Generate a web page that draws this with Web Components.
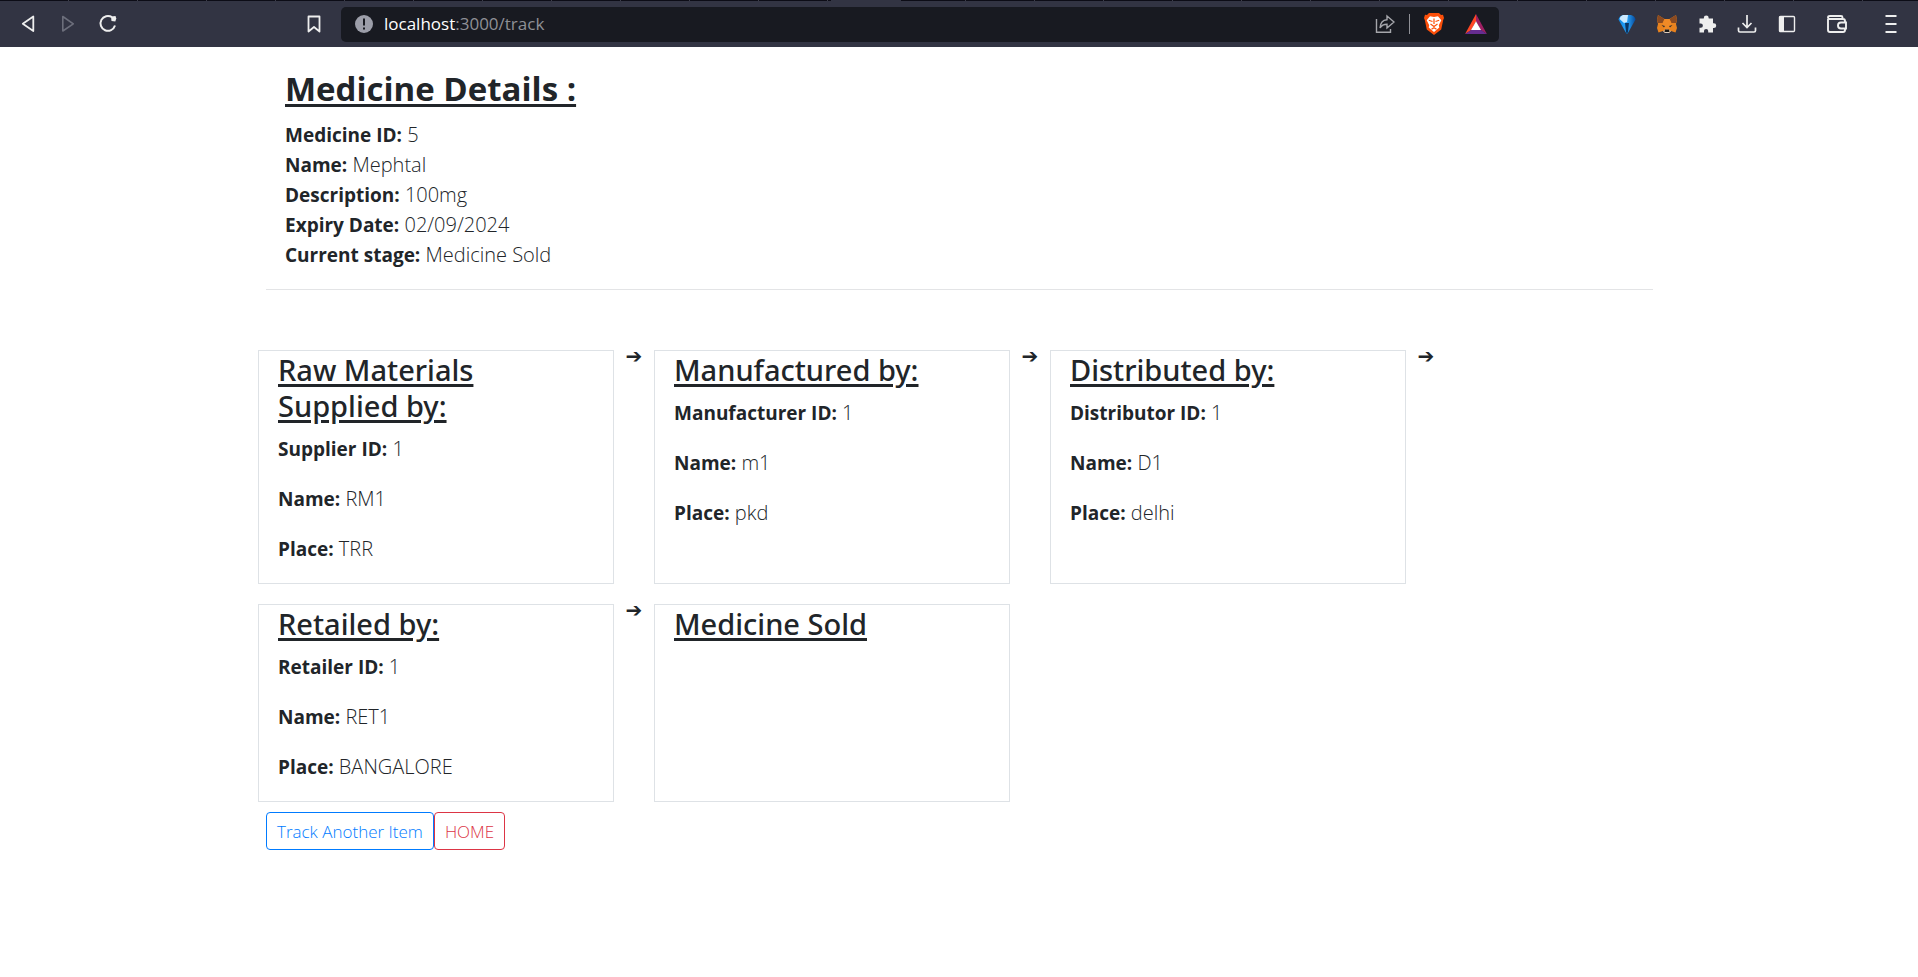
<!DOCTYPE html>
<html lang="en">
<head>
<meta charset="utf-8">
<title>Track</title>
<style>
body{margin:0;background:#fff;color:#212529;font-family:"Open Sans","Noto Sans",sans-serif}
</style>
</head>
<body>
<browser-bar></browser-bar>
<track-page></track-page>
<script>
const define=(name,html,setup)=>customElements.define(name,class extends HTMLElement{
  constructor(){
    super();
    const t=document.createElement('template');
    t.innerHTML=html;
    this.attachShadow({mode:'open'}).append(t.content.cloneNode(true));
  }
  connectedCallback(){if(setup)setup(this,this.shadowRoot);}
});

define('bar-button',`<style>
:host{display:block;flex:none}
button{display:flex;align-items:center;justify-content:center;width:24px;height:24px;padding:0;border:0;background:none;color:inherit}
</style><button type="button"><slot></slot></button>`,
(host,root)=>root.querySelector('button').setAttribute('aria-label',host.getAttribute('label')));

define('address-bar',`<style>
:host{display:flex;align-items:center;height:35px;border-radius:5px;background:#181a21;color:#8f9096;font-size:17px;padding:0 11px;box-sizing:border-box}
.url{flex:1;margin-left:8px;line-height:24px}
b{font-weight:400;color:#fff}
i{width:1px;height:20px;background:#8f9096;margin:0 12px}
.last{margin-left:18px}
</style>
<svg width="24" height="24" viewBox="0 0 24 24"><circle cx="12" cy="12" r="9" fill="#9c9ea9"/><path d="M12 6.500v7M12 15.500v2" stroke="#181a21" stroke-width="2"/></svg>
<span class="url"><b>localhost</b>:3000/track</span>
<bar-button label="Share"><svg width="20" height="20" viewBox="0 0 20 20" fill="none" stroke="#a5a6ab" stroke-width="1.400"><path d="M1.500 5v13.300h14V15M12 2l7 6-7 6v-3.700c-3.500 0-5.500 1.200-7 3.700 .3-4.500 2.500-8 7-8.300z"/></svg></bar-button><i></i>
<bar-button label="Shields"><svg width="20" height="24" viewBox="0 0 20 24"><path d="M5 1h10l2 2 2-.2 1 3.200-.8 2-2 9.500-7.200 5.500-7.200-5.500-2-9.500L0 6l1-3.200L3 3z" fill="#fb4f0a"/><path d="M6 4.200l4 .8 4-.8 3.300 4-2.500 5 .5 2.200L10 20l-5.300-4.600 .5-2.200L2.700 8.200z" fill="#fff"/><path d="M4.800 8.300l3.700 1.200M15.200 8.300l-3.700 1.200M10 6.500v5.500M6.500 12l3.500 2.500 3.500-2.500M7.500 17.300l2.500-1.500 2.500 1.500" stroke="#fb4f0a" stroke-width="1.200" fill="none"/></svg></bar-button>
<bar-button label="Rewards" class="last"><svg width="22" height="20" viewBox="0 0 24 22"><path d="M12 0L0 22l6.500-4L12 8z" fill="#ff4724"/><path d="M12 0l12 22-6.500-4L12 8z" fill="#9e1f63"/><path d="M0 22h24l-6.500-4.500h-11z" fill="#662d91"/><path d="M12 8l5.500 9.500h-11z" fill="#fff"/></svg></bar-button>`);

define('browser-bar',`<style>
:host{display:block;background:#323443;color:#eee}
.tabs{height:1px;background:linear-gradient(#323443,#323443) 831px 0/70px 1px no-repeat,repeating-linear-gradient(90deg,#0c0c16 0 68px,#3c3d4a 68px 69px)}
nav{display:flex;align-items:center;height:46px;padding:0 15px 0 16px}
address-bar{flex:1;margin-left:15px}
.left,.right{display:flex;gap:16px;flex:none}
.mark{margin-left:182px}
.right{margin-left:116px}
.dim{color:#6c6e7b}
.wallet{margin-left:10px}
.menu{margin-left:14px}
</style><div class="tabs"></div><nav>
<div class="left">
<bar-button label="Back"><svg width="24" height="24" viewBox="0 0 24 24" fill="none" stroke="currentColor" stroke-width="1.800" stroke-linejoin="round"><path d="M17.300 4.500v14.500L6.800 11.800z"/></svg></bar-button>
<bar-button label="Forward" class="dim"><svg width="24" height="24" viewBox="0 0 24 24" fill="none" stroke="currentColor" stroke-width="1.600" stroke-linejoin="round"><path d="M6.800 4.500v14.500l10.500-7.200z"/></svg></bar-button>
<bar-button label="Reload"><svg width="24" height="24" viewBox="0 0 24 24" fill="none" stroke="currentColor" stroke-width="2"><path d="M16 5.200a7.400 7.400 0 1 0 3 8.300"/><path d="M15 4.500l4.500-.5.8 2.500-1 3-3.800-.5z" fill="currentColor" stroke="none"/></svg></bar-button>
</div>
<bar-button label="Bookmark" class="mark"><svg width="24" height="24" viewBox="0 0 24 24" fill="none" stroke="currentColor" stroke-width="1.800" stroke-linejoin="round"><path d="M6.500 4.500h11v15L12 15l-5.500 4.500z"/></svg></bar-button>
<address-bar></address-bar>
<div class="right">
<bar-button label="Diamond extension"><svg width="24" height="24" viewBox="0 0 24 24"><defs><linearGradient id="g"><stop offset="0" stop-color="#0a86e6"/><stop offset=".5" stop-color="#2ba3f7"/><stop offset="1" stop-color="#064a9c"/></linearGradient></defs><path d="M8 3h8q4 1 4.500 4.500L13.500 20 12 22l-1.500-2L3.500 7.500Q4 4 8 3z" fill="url(#g)"/><path d="M8 3h5l-1 7-3 1-4.500-4Q5 4 8 3z" fill="#cdeafe"/><path d="M10 11h4l-1 9-1 2-1-2z" fill="#0a3564"/></svg></bar-button>
<bar-button label="MetaMask"><svg width="24" height="24" viewBox="0 0 24 24"><path d="M3 3l6.500 4h5L21 3l1 5-1 4 1 4-1.500 4.500L16 19l-2 2h-4l-2-2-4.500 1.500L2 16l1-4-1-4z" fill="#e8821e"/><path d="M3 3l6.500 4-2 4L3 11 2 8zM21 3l-6.500 4 2 4 4.500 0 1-3z" fill="#8a4a21"/><path d="M9.500 7h5l2 5-2 6h-5l-2-6z" fill="#f08a26"/><path d="M6.500 13l3.500 1-1 1.500zM17.500 13l-3.500 1 1 1.500z" fill="#34302f"/><path d="M8 19l2 2h4l2-2-3-1.500h-2z" fill="#d9cbbd"/><path d="M10 17.500h4l.5 2.500h-5z" fill="#191716"/></svg></bar-button>
<bar-button label="Extensions"><svg width="24" height="24" viewBox="0 0 24 24" fill="currentColor"><path d="M4.500 6.500h4.300V6a2.400 2.400 0 0 1 4.900 0v.5H18v4.700h.8a2.400 2.400 0 0 1 0 4.900H18v4.400h-4.800V19a2.100 2.100 0 0 0-4.200 0v1.500H4.500v-4.700h1.300a2.100 2.100 0 0 0 0-4.200H4.500z"/></svg></bar-button>
<bar-button label="Downloads"><svg width="24" height="24" viewBox="0 0 24 24" fill="none" stroke="currentColor" stroke-width="1.700"><path d="M12 3v12.500M7.500 11l4.500 4.500 4.500-4.500M3.500 15.500v3q0 1.500 1.500 1.500h14q1.500 0 1.500-1.500v-3"/></svg></bar-button>
<bar-button label="Sidebar"><svg width="24" height="24" viewBox="0 0 24 24"><rect x="4.500" y="4.500" width="15" height="15" rx="1" fill="none" stroke="currentColor" stroke-width="1.400"/><path d="M4 4.500h5v15H4z" fill="currentColor"/></svg></bar-button>
<bar-button label="Wallet" class="wallet"><svg width="24" height="24" viewBox="0 0 24 24" fill="none" stroke="currentColor" stroke-width="1.900"><path d="M3 7v11q0 2 2 2h13q2 0 2-2v-1.500M20 10.500V9q0-2-2-2H4.500Q3 7 3 5.500T5 4h11q1.500 0 1.500 1.500V7M21 10.500h-5a3 3 0 0 0 0 6h5z"/></svg></bar-button>
<bar-button label="Menu" class="menu"><svg width="24" height="24" viewBox="0 0 24 24" stroke="currentColor" stroke-width="2"><path d="M6.500 4h11M6.500 12h11M6.500 20h11"/></svg></bar-button>
</div></nav>`);

define('info-line',`<style>
:host{display:block;font-size:20px;font-weight:300;line-height:30px}
b{font-size:19px;font-weight:700}
</style><b><slot name="label"></slot></b> <slot></slot>`);

define('stage-card',`<style>
:host{display:block;box-sizing:border-box;border:1px solid #dee2e6;padding:1px 19px 0}
h2{margin:0 0 10px;font:500 29px/36px "Noto Sans","Open Sans",sans-serif;text-decoration:underline;text-decoration-thickness:3px;text-underline-offset:3px}
::slotted(info-line){margin-bottom:20px}
::slotted(info-line:last-child){margin-bottom:19px}
</style><h2><slot name="title"></slot></h2><slot></slot>`);

define('stage-arrow',`<style>
:host{display:block;text-align:center;font:20px/12px "DejaVu Sans",sans-serif}
</style>➔`);

define('action-button',`<style>
:host{display:block;color:#007bff}
:host([danger]){color:#dc3545}
button{display:block;height:38px;padding:1px 10px 0;border:1px solid currentColor;border-radius:4px;background:none;color:inherit;font:300 17px/24px "Open Sans",sans-serif}
</style><button type="button"><slot></slot></button>`);

define('track-page',`<style>
:host{display:block;max-width:1388px;margin:0 auto;padding:21px 0 0 1px;box-sizing:border-box}
header{padding:0 19px 19px;border-bottom:1px solid #e3e4e6}
h1{font-size:33px;line-height:42px;font-weight:700;margin:0 0 10px;text-decoration:underline;text-decoration-thickness:3px;text-underline-offset:3px}
main{display:grid;grid-template-columns:repeat(3,minmax(0,356px) 40px);row-gap:20px;margin:60px 0 10px -8px}
footer{display:flex}
</style>
<header><h1>Medicine Details :</h1>
<info-line><span slot="label">Medicine ID:</span>5</info-line>
<info-line><span slot="label">Name:</span>Mephtal</info-line>
<info-line><span slot="label">Description:</span>100mg</info-line>
<info-line><span slot="label">Expiry Date:</span>02/09/2024</info-line>
<info-line><span slot="label">Current stage:</span>Medicine Sold</info-line>
</header>
<main>
<stage-card><span slot="title">Raw Materials Supplied by:</span>
<info-line><span slot="label">Supplier ID:</span>1</info-line><info-line><span slot="label">Name:</span>RM1</info-line><info-line><span slot="label">Place:</span>TRR</info-line></stage-card>
<stage-arrow></stage-arrow>
<stage-card><span slot="title">Manufactured by:</span>
<info-line><span slot="label">Manufacturer ID:</span>1</info-line><info-line><span slot="label">Name:</span>m1</info-line><info-line><span slot="label">Place:</span>pkd</info-line></stage-card>
<stage-arrow></stage-arrow>
<stage-card><span slot="title">Distributed by:</span>
<info-line><span slot="label">Distributor ID:</span>1</info-line><info-line><span slot="label">Name:</span>D1</info-line><info-line><span slot="label">Place:</span>delhi</info-line></stage-card>
<stage-arrow></stage-arrow>
<stage-card><span slot="title">Retailed by:</span>
<info-line><span slot="label">Retailer ID:</span>1</info-line><info-line><span slot="label">Name:</span>RET1</info-line><info-line><span slot="label">Place:</span>BANGALORE</info-line></stage-card>
<stage-arrow></stage-arrow>
<stage-card><span slot="title">Medicine Sold</span></stage-card>
</main>
<footer><action-button>Track Another Item</action-button><action-button danger>HOME</action-button></footer>`);
</script>
</body>
</html>
